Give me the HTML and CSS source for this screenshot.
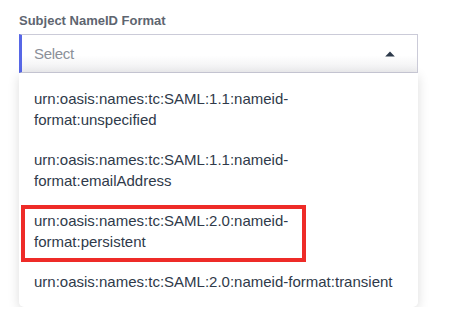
FILE: index.html
```html
<!DOCTYPE html>
<html lang="en">
<head>
<meta charset="utf-8">
<title>Subject NameID Format</title>
<link rel="stylesheet" href="styles.css">
</head>
<body>
<div class="field">
  <div class="label">Subject NameID Format</div>
  <div class="select">
    <span class="placeholder">Select</span>
    <svg class="caret" width="10" height="6" viewBox="0 0 10 6"><path d="M5 0.5 L9.8 5.5 L0.2 5.5 Z" fill="#2d3a4a"/></svg>
  </div>
  <ul class="menu">
    <li class="option">urn:oasis:names:tc:SAML:1.1:nameid-format:unspecified</li>
    <li class="option">urn:oasis:names:tc:SAML:1.1:nameid-format:emailAddress</li>
    <li class="option marked">urn:oasis:names:tc:SAML:2.0:nameid-format:persistent<span class="highlight"></span></li>
    <li class="option">urn:oasis:names:tc:SAML:2.0:nameid-format:transient</li>
  </ul>
</div>
</body>
</html>
```
FILE: styles.css
```css
html, body {
  margin: 0;
  padding: 0;
  background: #ffffff;
}
body {
  font-family: "Liberation Sans", Arial, sans-serif;
}
.field {
  width: 399px;
  margin-left: 19px;
  padding-top: 13px;
}
.label {
  font-size: 13px;
  line-height: 16px;
  font-weight: bold;
  color: #5e6570;
  margin-bottom: 5px;
}
.select {
  box-sizing: border-box;
  height: 39px;
  border: 1px solid #cbcbd8;
  border-left: 3px solid #5767e6;
  display: flex;
  align-items: center;
  justify-content: space-between;
  padding: 0 22px 0 12px;
  background: linear-gradient(to bottom, #ffffff 55%, #eeeef0 100%);
}
.placeholder {
  font-size: 15px;
  color: #8b9099;
  letter-spacing: -0.3px;
}
.caret {
  display: block;
  margin-top: 1px;
}
.menu {
  list-style: none;
  margin: 0;
  padding: 6px 0 4px;
  background: #ffffff;
  border-radius: 0 0 5px 5px;
  box-shadow: 0 3px 12px rgba(0, 0, 0, 0.14);
}
.option {
  position: relative;
  font-size: 15px;
  line-height: 20.5px;
  color: #2f3a4a;
  padding: 10px 21px 10px 15px;
}
.highlight {
  position: absolute;
  left: 2px;
  top: 4px;
  width: 285px;
  height: 57px;
  box-sizing: border-box;
  border: 4px solid #ee2b28;
}
```
